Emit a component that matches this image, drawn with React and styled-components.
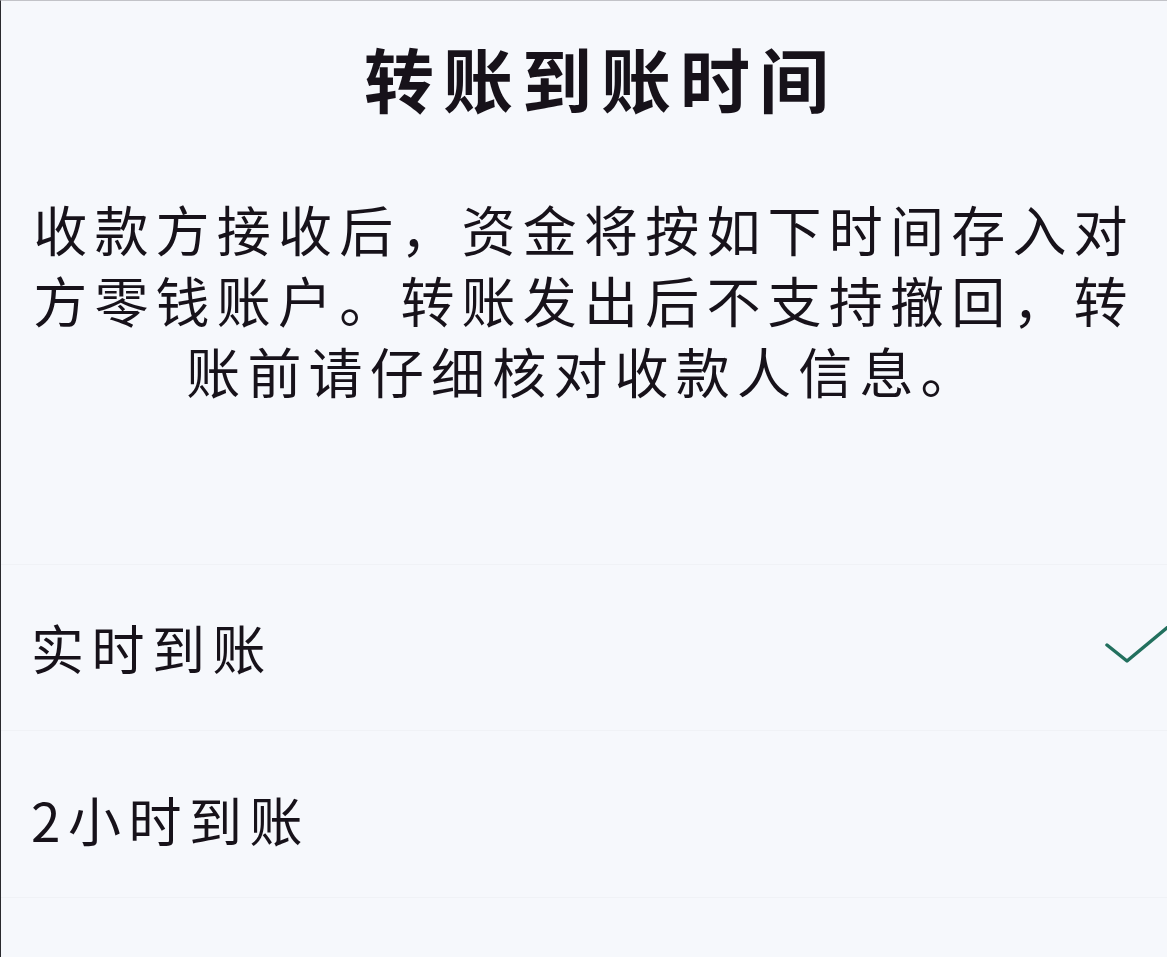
import styled, { createGlobalStyle } from 'styled-components';

const GlobalStyle = createGlobalStyle`
    html, body {
        margin: 0;
        padding: 0;
        background: #f6f8fc;
    }
    * {
        box-sizing: border-box;
    }
`

const Page = styled.div`
    width: 1167px;
    height: 957px;
    overflow: hidden;
    background: #f6f8fc;
    border-top: 1px solid #c2c3c8;
    border-left: 1px solid #2a2a2e;
    font-family: "Noto Sans CJK SC", "Noto Sans", sans-serif;
    color: #17121a;
`

const Title = styled.h1`
    margin: 0;
    padding: 41px 0 0 34px;
    font-size: 70px;
    line-height: 72px;
    font-weight: 700;
    letter-spacing: 9px;
    text-align: center;
`

const Notice = styled.p`
    margin: 79px 0 0;
    padding: 0 24px;
    font-size: 54px;
    line-height: 71px;
    font-weight: 400;
    letter-spacing: 7.2px;
    text-align: center;
`

const OptionList = styled.ul`
    list-style: none;
    margin: 158px 0 0;
    padding: 0;
    border-top: 1px solid #f0f2f6;
`

const Option = styled.li`
    display: flex;
    align-items: center;
    justify-content: space-between;
    height: ${({ $height }) => $height}px;
    padding: ${({ $offset }) => $offset}px 0 0 30px;
    border-bottom: 1px solid #f0f2f6;
    font-size: 53px;
    letter-spacing: 7.5px;
`

const Label = styled.span`
    line-height: 1;
`

const Check = styled.svg`
    width: 64px;
    height: 44px;
    margin-right: -2px;
    flex-shrink: 0;
`

function CheckMark() {
    return (
        <Check viewBox="0 0 64 44">
            <path
                d="M2 19 L22 35 L63 1"
                fill="none"
                stroke="#22705e"
                strokeWidth="3.5"
                strokeLinecap="round"
                strokeLinejoin="round"
            />
        </Check>
    )
}

const options = [
    { label: '实时到账', selected: true, height: 166, offset: 0 },
    { label: '2小时到账', selected: false, height: 167, offset: 10 },
]

function App() {
    return (
        <>
            <GlobalStyle />
            <Page>
                <Title>转账到账时间</Title>
                <Notice>
                    收款方接收后，资金将按如下时间存入对方零钱账户。转账发出后不支持撤回，转账前请仔细核对收款人信息。
                </Notice>
                <OptionList>
                    {options.map((opt) => (
                        <Option key={opt.label} $height={opt.height} $offset={opt.offset}>
                            <Label>{opt.label}</Label>
                            {opt.selected ? <CheckMark /> : null}
                        </Option>
                    ))}
                </OptionList>
            </Page>
        </>
    )
}

export default App;
